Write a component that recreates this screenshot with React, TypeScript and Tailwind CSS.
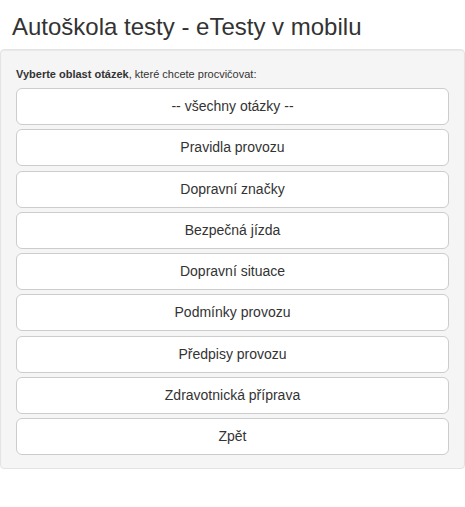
const ITEMS = [
  "-- všechny otázky --",
  "Pravidla provozu",
  "Dopravní značky",
  "Bezpečná jízda",
  "Dopravní situace",
  "Podmínky provozu",
  "Předpisy provozu",
  "Zdravotnická příprava",
  "Zpět",
];

export default function App() {
  return (
    <div className="min-h-[507px] bg-white font-['Liberation_Sans',Arial,sans-serif] text-[#333]">
      <h1 className="px-3 pt-[12px] pb-[7px] text-[24px] leading-[30px]">
        Autoškola testy - eTesty v mobilu
      </h1>
      <div className="rounded-[4px] border border-[#e3e3e3] bg-[#f5f5f5] px-[15px] pt-[15px] pb-[13px] shadow-[inset_0_1px_1px_rgba(0,0,0,0.05)]">
        <p className="mb-[4px] text-[11px] leading-[19px]">
          <b>Vyberte oblast otázek</b>, které chcete procvičovat:
        </p>
        <div className="flex flex-col gap-[4.25px]">
          {ITEMS.map((t) => (
            <button
              key={t}
              className="h-[37px] w-full rounded-[6px] border border-[#ccc] bg-white text-[14px] text-[#333]"
            >
              {t}
            </button>
          ))}
        </div>
      </div>
    </div>
  );
}
